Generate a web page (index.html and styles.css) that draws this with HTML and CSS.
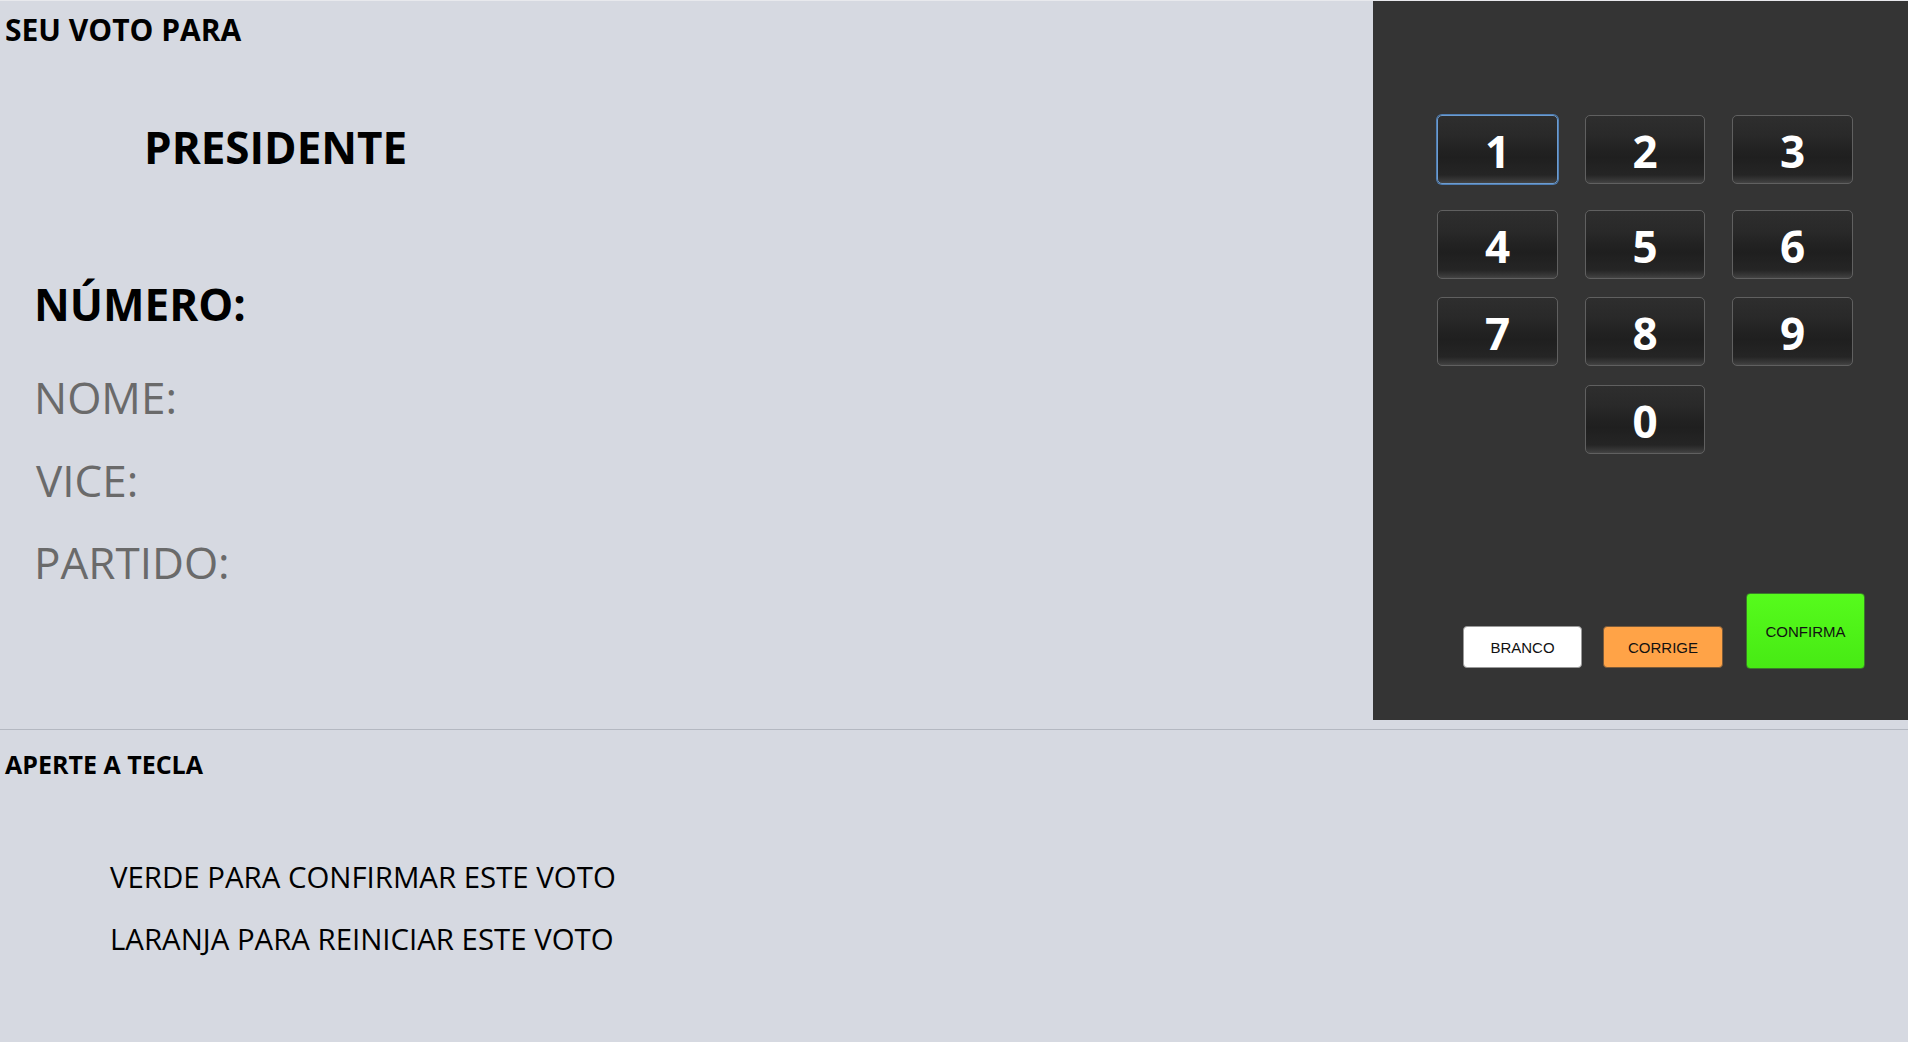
FILE: index.html
```html
<!DOCTYPE html>
<html lang="pt-BR">
<head>
<meta charset="utf-8">
<title>Urna eletrônica</title>
<link rel="stylesheet" href="styles.css">
</head>
<body>
<div class="screen">
  <div class="top">
    <section class="info">
      <div class="lead">SEU VOTO PARA</div>
      <div class="office">PRESIDENTE</div>
      <div class="number">NÚMERO:</div>
      <div class="field f-nome">NOME:</div>
      <div class="field f-vice">VICE:</div>
      <div class="field f-partido">PARTIDO:</div>
    </section>
    <aside class="panel">
      <div class="keys">
        <button class="key first focus">1</button>
        <button class="key first">2</button>
        <button class="key first">3</button>
        <button class="key">4</button>
        <button class="key">5</button>
        <button class="key">6</button>
        <button class="key">7</button>
        <button class="key">8</button>
        <button class="key">9</button>
        <button class="key zero">0</button>
      </div>
      <div class="actions">
        <button class="act branco">BRANCO</button>
        <button class="act corrige">CORRIGE</button>
        <button class="act confirma">CONFIRMA</button>
      </div>
    </aside>
  </div>
  <hr class="sep">
  <section class="help">
    <div class="help-title">APERTE A TECLA</div>
    <div class="help-line l-verde">VERDE PARA CONFIRMAR ESTE VOTO</div>
    <div class="help-line l-laranja">LARANJA PARA REINICIAR ESTE VOTO</div>
  </section>
</div>
</body>
</html>
```

FILE: styles.css
```css
html, body {
  margin: 0;
  padding: 0;
}

body {
  background: #d6d9e1;
  border-top: 1px solid #e8e9ed;
  font-family: "Open Sans", "Noto Sans", "DejaVu Sans", sans-serif;
  color: #000;
  height: 1041px;
  overflow: hidden;
}

.top {
  display: flex;
  height: 719px;
}

.info {
  flex: 1;
  padding: 14px 0 0 5px;
}

.lead {
  font-size: 30px;
  line-height: 30px;
  font-weight: 700;
}

.office {
  font-size: 44px;
  line-height: 44px;
  font-weight: 700;
  margin: 80px 0 0 139px;
}

.number {
  font-size: 44px;
  line-height: 44px;
  font-weight: 700;
  margin: 113px 0 0 29px;
}

.field {
  font-size: 44px;
  line-height: 44px;
  font-weight: 400;
  color: #6a6a6a;
  margin-left: 29px;
}

.f-nome { margin-top: 49px; }
.f-vice { margin-top: 39px; margin-left: 31px; }
.f-partido { margin-top: 38px; }

.panel {
  width: 535px;
  background: #343434;
  padding: 114px 0 0 64px;
  box-sizing: border-box;
}

.keys {
  display: grid;
  grid-template-columns: 121px 120px 121px;
  column-gap: 27px;
  row-gap: 18px;
  align-items: start;
}

.key {
  height: 69px;
  padding: 3px 0 0;
  margin: 0;
  border: 1px solid #606060;
  border-radius: 5px;
  background: linear-gradient(to bottom, #2e2e2e 0%, #292929 30%, #222 50%, #1f1f1f 62%, #252525 88%, #3a3a3a 97%, #444 100%);
  color: #fff;
  font-family: "Open Sans", "Noto Sans", sans-serif;
  font-weight: 700;
  font-size: 44px;
  line-height: 1;
  display: flex;
  align-items: center;
  justify-content: center;
  box-sizing: border-box;
}

.key.first { margin-bottom: 8px; }

.key.focus {
  border-color: #6d9ccf;
  box-shadow: 0 0 0 1px #4f7eb4;
}

.key.zero { grid-column: 2; margin-top: 1px; }

.actions {
  display: flex;
  align-items: flex-end;
  margin: 139px 0 0 26px;
}

.act {
  margin: 0 0 1px;
  padding: 0;
  width: 119px;
  height: 42px;
  border-radius: 4px;
  border: 1px solid #8a8a8a;
  font-family: "Liberation Sans", Arial, sans-serif;
  font-size: 15px;
  color: #111;
  box-sizing: border-box;
}

.branco {
  background: #fff;
  border-color: #9a9a9a;
}

.corrige {
  width: 120px;
  margin-left: 21px;
  background: #ffa347;
  border-color: #7a5a3a;
}

.confirma {
  height: 76px;
  margin: 0 0 0 23px;
  background: linear-gradient(to bottom, #56fb1c, #47ea14);
  border-color: #3a7a2a;
}

.sep {
  margin: 9px 0 0;
  border: 0;
  border-top: 1px solid #b4b8c1;
  height: 0;
}

.help {
  padding-left: 5px;
}

.help-title {
  font-size: 25px;
  line-height: 25px;
  font-weight: 700;
  margin-top: 22px;
}

.help-line {
  font-size: 29.4px;
  line-height: 29px;
  font-weight: 400;
  margin-left: 105px;
}

.l-verde { margin-top: 86px; }
.l-laranja { margin-top: 33px; }
```
